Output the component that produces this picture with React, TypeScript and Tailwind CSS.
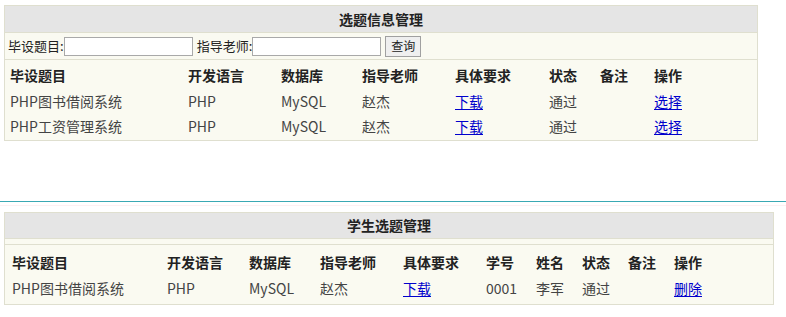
import React from "react";

const font = { fontFamily: '"Microsoft YaHei", "Noto Sans CJK SC", "Noto Sans", sans-serif' };

type Row = { cells: (string | { link: string })[] };

const topWidths = ["w-[178px]", "w-[93px]", "w-[81px]", "w-[93px]", "w-[94px]", "w-[51px]", "w-[54px]", "flex-1"];
const topHead = ["毕设题目", "开发语言", "数据库", "指导老师", "具体要求", "状态", "备注", "操作"];
const topRows: Row[] = [
  { cells: ["PHP图书借阅系统", "PHP", "MySQL", "赵杰", { link: "下载" }, "通过", "", { link: "选择" }] },
  { cells: ["PHP工资管理系统", "PHP", "MySQL", "赵杰", { link: "下载" }, "通过", "", { link: "选择" }] },
];

const botWidths = ["w-[155px]", "w-[82px]", "w-[71px]", "w-[83px]", "w-[83px]", "w-[50px]", "w-[46px]", "w-[46px]", "w-[46px]", "flex-1"];
const botHead = ["毕设题目", "开发语言", "数据库", "指导老师", "具体要求", "学号", "姓名", "状态", "备注", "操作"];
const botRows: Row[] = [
  { cells: ["PHP图书借阅系统", "PHP", "MySQL", "赵杰", { link: "下载" }, "0001", "李军", "通过", "", { link: "删除" }] },
];

function Cell({ value, width }: { value: string | { link: string }; width: string }) {
  return (
    <div className={`${width} shrink-0`}>
      {typeof value === "string" ? (
        value
      ) : (
        <a href="#" className="text-[#0000cc] underline underline-offset-2">{value.link}</a>
      )}
    </div>
  );
}

export default function App() {
  return (
    <div className="w-[786px] h-[317px] bg-white text-[14px] text-[#444]" style={font}>
      {/* 选题信息管理 */}
      <div className="ml-[4px] mt-[5px] w-[754px] border border-[#dfdfcf] bg-[#fafaf1]">
        <div className="h-[27px] bg-[#e5e5e5] border-b border-[#dfdfcf] flex items-center justify-center font-bold text-[14px] text-[#222]">
          选题信息管理
        </div>
        <div className="h-[27px] border-b border-[#dfdfcf] flex items-center pl-[3px] text-[13px] text-[#222]">
          <span>毕设题目:</span>
          <input className="w-[129px] h-[19px] border border-[#a9a9a9] bg-white outline-none" />
          <span className="ml-[4px]">指导老师:</span>
          <input className="w-[129px] h-[19px] border border-[#a9a9a9] bg-white outline-none" />
          <button className="ml-[4px] h-[21px] px-[5px] border border-[#a0a0a0] bg-[#efefef] text-[12px] leading-none text-[#222]">
            查询
          </button>
        </div>
        <div className="pl-[5px] pt-[1px] pb-[1px]">
          <div className="flex h-[28px] items-center font-bold text-[#222]">
            {topHead.map((h, i) => (
              <Cell key={i} value={h} width={topWidths[i]} />
            ))}
          </div>
          {topRows.map((r, ri) => (
            <div key={ri} className="flex h-[25px] items-center">
              {r.cells.map((c, i) => (
                <Cell key={i} value={c} width={topWidths[i]} />
              ))}
            </div>
          ))}
        </div>
      </div>

      {/* divider */}
      <div className="mt-[60px] h-[1px] bg-[#3aa8b3]" />
      <div className="mt-[3px] h-[1px] bg-[#fdf0f2]" />

      {/* 学生选题管理 */}
      <div className="ml-[4px] mt-[6px] w-[770px] border border-[#dfdfcf] bg-[#fafaf1]">
        <div className="h-[26px] bg-[#e5e5e5] border-b border-[#dfdfcf] flex items-center justify-center font-bold text-[14px] text-[#222]">
          学生选题管理
        </div>
        <div className="h-[6px] border-b border-[#dfdfcf]" />
        <div className="pl-[7px] pt-[3px] pb-[3px]">
          <div className="flex h-[28px] items-center font-bold text-[#222]">
            {botHead.map((h, i) => (
              <Cell key={i} value={h} width={botWidths[i]} />
            ))}
          </div>
          {botRows.map((r, ri) => (
            <div key={ri} className="flex h-[25px] items-center">
              {r.cells.map((c, i) => (
                <Cell key={i} value={c} width={botWidths[i]} />
              ))}
            </div>
          ))}
        </div>
      </div>
    </div>
  );
}
